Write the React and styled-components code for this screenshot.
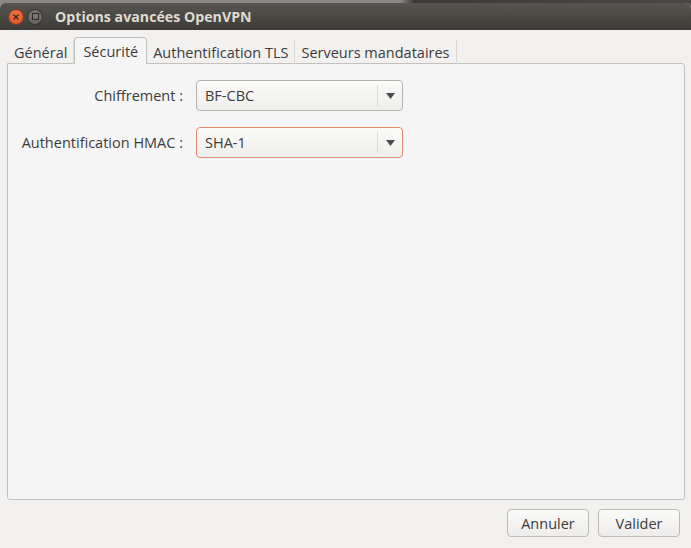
import { Fragment } from 'react';
import styled, { createGlobalStyle } from 'styled-components';

const GlobalStyle = createGlobalStyle`
  html, body {
    margin: 0;
    padding: 0;
    background: #2b2a28;
  }
  body {
    font-family: 'Open Sans', 'Noto Sans', sans-serif;
    overflow: hidden;
  }
`;

const Desktop = styled.div`
  width: 691px;
  height: 548px;
  padding-top: 3px;
  box-sizing: border-box;
  background: linear-gradient(90deg, #8a8885 0%, #8a8885 58%, #3a3936 60%, #4a4945 100%);
`;

const Window = styled.div`
  height: 545px;
  display: flex;
  flex-direction: column;
  background: #f2f1f0;
  border-radius: 5px 5px 0 0;
  overflow: hidden;
`;

const TitleBar = styled.div`
  height: 27px;
  flex-shrink: 0;
  display: flex;
  align-items: center;
  padding-left: 9px;
  background: linear-gradient(#57554f, #3d3c38);
`;

const WinButton = styled.div`
  width: 14px;
  height: 14px;
  border-radius: 50%;
  margin-right: 5px;
  display: flex;
  align-items: center;
  justify-content: center;
  background: ${(p) => (p.close ? 'radial-gradient(circle at 50% 35%, #f2774a, #d94e22)' : 'radial-gradient(circle at 50% 35%, #7d7b76, #5c5a55)')};
  box-shadow: 0 0 0 1px ${(p) => (p.close ? '#8a3a1d' : '#33322f')};
`;

const Title = styled.div`
  margin-left: 8px;
  color: #dfdbd2;
  font-weight: 700;
  font-size: 14.2px;
`;

const Body = styled.div`
  flex: 1;
  display: flex;
  flex-direction: column;
  padding: 7px 6px 11px 7px;
`;

const TabRow = styled.div`
  display: flex;
  align-items: flex-end;
  height: 27px;
  padding-left: 1px;
  margin-bottom: -1px;
  position: relative;
  z-index: 1;
`;

const Tab = styled.div`
  height: 24px;
  box-sizing: border-box;
  display: flex;
  align-items: center;
  padding: 0 ${(p) => (p.active ? '8px' : '6px')};
  font-size: 14.5px;
  color: #3c3c3c;
  border-right: 1px solid #d9d7d3;
  ${(p) =>
    p.active &&
    `
    background: #f5f5f5;
    border: 1px solid #c3c1bd;
    border-bottom: none;
    border-radius: 4px 4px 0 0;
    height: 27px;
  `}
`;

const Panel = styled.div`
  flex: 1;
  background: #f5f5f5;
  border: 1px solid #c3c1bd;
  border-radius: 0 3px 3px 3px;
  padding: 16px 0 0 0;
`;

const FormGrid = styled.div`
  display: grid;
  grid-template-columns: 182px 207px;
  column-gap: 6px;
  row-gap: 16px;
  align-items: center;
`;

const Label = styled.div`
  text-align: right;
  padding-right: 7px;
  font-size: 14.5px;
  color: #3c3c3c;
`;

const Combo = styled.div`
  height: 31px;
  box-sizing: border-box;
  display: flex;
  align-items: center;
  border-radius: 4px;
  border: 1px solid ${(p) => (p.focused ? '#e18b6d' : '#b5b3af')};
  background: linear-gradient(#fbfbfa, #efeeec);
`;

const ComboText = styled.div`
  flex: 1;
  padding-left: 8px;
  font-size: 14.5px;
  color: #3c3c3c;
`;

const ComboArrow = styled.div`
  width: 24px;
  height: 21px;
  border-left: 1px solid #dcdad6;
  display: flex;
  align-items: center;
  justify-content: center;
`;

const Footer = styled.div`
  display: flex;
  justify-content: flex-end;
  gap: 9px;
  padding-top: 9px;
  padding-right: 5px;
`;

const Button = styled.button`
  width: 82px;
  height: 28px;
  box-sizing: border-box;
  border: 1px solid #bcbab6;
  border-radius: 4px;
  background: linear-gradient(#fbfbfa, #edecea);
  font-family: inherit;
  font-size: 14.5px;
  color: #3c3c3c;
  padding: 0;
`;

const Arrow = () => (
  <svg width="9" height="6" viewBox="0 0 9 6">
    <path d="M0 0 H9 L4.5 6 Z" fill="#4c4c4c" />
  </svg>
);

const fields = [
  { label: 'Chiffrement :', value: 'BF-CBC' },
  { label: 'Authentification HMAC :', value: 'SHA-1', focused: true },
];

export default function App() {
  return (
    <>
      <GlobalStyle />
      <Desktop>
        <Window>
          <TitleBar>
            <WinButton close>
              <svg width="6" height="6" viewBox="0 0 6 6">
                <path d="M0.5 0.5 L5.5 5.5 M5.5 0.5 L0.5 5.5" stroke="#3a1a0e" strokeWidth="1.2" />
              </svg>
            </WinButton>
            <WinButton>
              <svg width="7" height="7" viewBox="0 0 7 7">
                <rect x="0.5" y="0.5" width="6" height="6" fill="none" stroke="#2e2d2a" strokeWidth="1" />
              </svg>
            </WinButton>
            <Title>Options avancées OpenVPN</Title>
          </TitleBar>
          <Body>
            <TabRow>
              <Tab>Général</Tab>
              <Tab active>Sécurité</Tab>
              <Tab>Authentification TLS</Tab>
              <Tab>Serveurs mandataires</Tab>
            </TabRow>
            <Panel>
              <FormGrid>
                {fields.map((f) => (
                  <Fragment key={f.label}>
                    <Label>{f.label}</Label>
                    <Combo focused={f.focused}>
                      <ComboText>{f.value}</ComboText>
                      <ComboArrow>
                        <Arrow />
                      </ComboArrow>
                    </Combo>
                  </Fragment>
                ))}
              </FormGrid>
            </Panel>
            <Footer>
              <Button>Annuler</Button>
              <Button>Valider</Button>
            </Footer>
          </Body>
        </Window>
      </Desktop>
    </>
  );
}
